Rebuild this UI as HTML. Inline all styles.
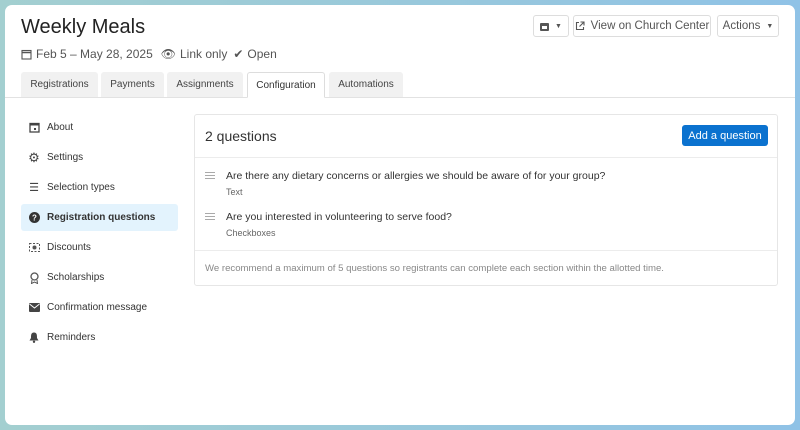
<!DOCTYPE html>
<html><head><meta charset="utf-8"><style>
*{box-sizing:border-box;margin:0;padding:0}
body{width:800px;height:430px;background:linear-gradient(90deg,#a3cfd0,#8fc2e6);font-family:"Liberation Sans",sans-serif;color:#333;position:relative;overflow:hidden}
.card{position:absolute;left:5px;top:5px;width:790px;height:420px;background:#fff;border-radius:7px}
.a{position:absolute}
h1{position:absolute;left:16px;top:11px;font-size:20px;font-weight:400;color:#222}
.meta{left:16px;top:42px;font-size:12px;color:#555;display:flex;align-items:center;gap:4px}
.btn{position:absolute;top:10px;height:22px;border:1px solid #ddd;border-radius:3px;font-size:11.5px;color:#555;display:flex;align-items:center;justify-content:center;gap:6px;white-space:nowrap}
.tab{position:absolute;top:67px;height:25px;background:#f1f1f1;border-radius:3px 3px 0 0;font-size:10px;color:#444;display:flex;align-items:center;justify-content:center}
.tab.on{background:#fff;border:1px solid #ddd;border-bottom:1px solid #fff;height:26px;z-index:2;color:#333}
.line{left:0;top:92px;width:790px;height:1px;background:#e2e2e2}
.side{position:absolute;left:16px;width:157px;height:27px;font-size:10px;color:#333;display:flex;align-items:center;padding-left:7px;border-radius:3px}
.side .ic{width:12px;height:12px;margin-right:7px;display:flex;align-items:center;justify-content:center}
.side.on{background:#e3f3fd;font-weight:700}
.panel{left:189px;top:109px;width:584px;height:172px;border:1px solid #e6e6e6;border-radius:3px}
.q{position:absolute;left:31px;font-size:10.5px;color:#333}
.q small{display:block;font-size:9px;color:#666;margin-top:5px}
.grip{position:absolute;left:10px;width:10px;height:7px;border-top:1px solid #aaa;border-bottom:1px solid #aaa}
.grip:after{content:"";position:absolute;left:0;top:2px;width:10px;height:1px;background:#aaa}
</style></head><body><div class="card">
<h1>Weekly Meals</h1>
<div class="a meta"><svg width="11" height="11" viewBox="0 0 11 11"><rect x="1" y="1.5" width="9" height="8.5" fill="none" stroke="#555" stroke-width="1.1"/><line x1="1" y1="3.5" x2="10" y2="3.5" stroke="#555" stroke-width="1.5"/></svg>Feb 5 – May 28, 2025 <span style="margin-left:4px">👁︎</span>Link only <span style="margin-left:2px">✔</span>Open</div>
<div class="btn" style="left:528px;width:36px"><svg width="9" height="9" viewBox="0 0 9 9"><rect x="0" y="1" width="9" height="8" rx="1" fill="#555"/><rect x="2" y="4" width="5" height="3" fill="#fff"/></svg><span style="font-size:7px">▼</span></div>
<div class="btn" style="left:568px;width:138px"><svg width="10" height="10" viewBox="0 0 10 10"><path d="M4 1.5H1.5V8.5H8.5V6" fill="none" stroke="#555" stroke-width="1.1"/><path d="M5.5 1H9V4.5M9 1L4.5 5.5" fill="none" stroke="#555" stroke-width="1.1"/></svg>View on Church Center</div>
<div class="btn" style="left:712px;width:62px">Actions <span style="font-size:7px">▼</span></div>
<div class="tab" style="left:16px;width:77px">Registrations</div>
<div class="tab" style="left:96px;width:63px">Payments</div>
<div class="tab" style="left:162px;width:76px">Assignments</div>
<div class="tab on" style="left:242px;width:78px">Configuration</div>
<div class="tab" style="left:324px;width:74px">Automations</div>
<div class="a line"></div>
<div class="side" style="top:109px"><span class="ic"><svg width="11" height="11"><rect x="1" y="1.5" width="9" height="8.5" fill="none" stroke="#444" stroke-width="1.3"/><rect x="1" y="1" width="9" height="2.5" fill="#444"/><rect x="5" y="6" width="2" height="2" fill="#444"/></svg></span>About</div>
<div class="side" style="top:139px"><span class="ic" style="font-size:13px;color:#444">⚙</span>Settings</div>
<div class="side" style="top:169px"><span class="ic" style="font-size:11px;color:#444">☰</span>Selection types</div>
<div class="side on" style="top:199px"><span class="ic"><svg width="11" height="11"><circle cx="5.5" cy="5.5" r="5.5" fill="#333"/><text x="5.5" y="8.5" font-size="8" fill="#fff" text-anchor="middle" font-family="Liberation Sans" font-weight="700">?</text></svg></span>Registration questions</div>
<div class="side" style="top:229px"><span class="ic"><svg width="11" height="11"><rect x="0.5" y="1.5" width="10" height="8" fill="none" stroke="#555" stroke-dasharray="2 1.5"/><circle cx="5.5" cy="5.5" r="2" fill="#555"/></svg></span>Discounts</div>
<div class="side" style="top:259px"><span class="ic"><svg width="11" height="12"><circle cx="5.5" cy="4.5" r="3.5" fill="none" stroke="#555" stroke-width="1.3"/><path d="M3 8 L2.5 11.5 L5.5 10 L8.5 11.5 L8 8" fill="none" stroke="#555"/></svg></span>Scholarships</div>
<div class="side" style="top:289px"><span class="ic"><svg width="11" height="9"><rect width="11" height="9" rx="1" fill="#444"/><path d="M0.5 1 L5.5 5 L10.5 1" stroke="#fff" fill="none"/></svg></span>Confirmation message</div>
<div class="side" style="top:319px"><span class="ic"><svg width="10" height="11"><path d="M5 0.5 C2 0.5 2 3 2 6 L0.5 8.5 L9.5 8.5 L8 6 C8 3 8 0.5 5 0.5Z" fill="#444"/><circle cx="5" cy="9.8" r="1.2" fill="#444"/></svg></span>Reminders</div>
<div class="a panel">
<div class="a" style="left:10px;top:13px;font-size:14px;color:#333">2 questions</div>
<div class="a" style="left:487px;top:10px;width:86px;height:21px;background:#0b72cf;border-radius:3px;color:#fff;font-size:11px;display:flex;align-items:center;justify-content:center">Add a question</div>
<div class="a" style="left:0;top:42px;width:582px;height:1px;background:#ececec"></div>
<div class="grip" style="top:57px"></div>
<div class="q" style="top:55px">Are there any dietary concerns or allergies we should be aware of for your group?<small>Text</small></div>
<div class="grip" style="top:98px"></div>
<div class="q" style="top:96px">Are you interested in volunteering to serve food?<small>Checkboxes</small></div>
<div class="a" style="left:0;top:135px;width:582px;height:1px;background:#ececec"></div>
<div class="a" style="left:10px;top:148px;font-size:9.6px;color:#888">We recommend a maximum of 5 questions so registrants can complete each section within the allotted time.</div>
</div>
</div></body></html>
